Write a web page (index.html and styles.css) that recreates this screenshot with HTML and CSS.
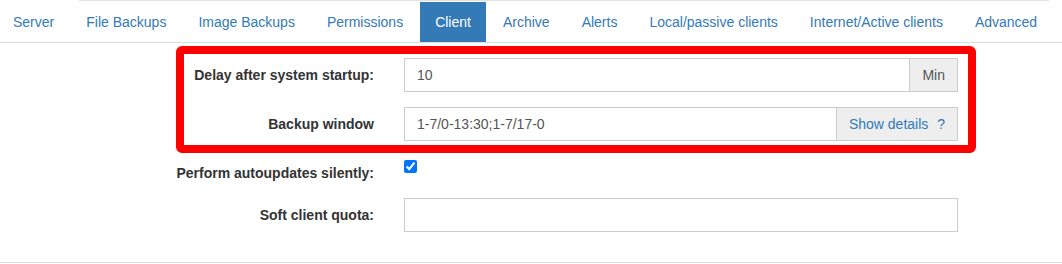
FILE: index.html
```html
<!DOCTYPE html>
<html lang="en">
<head>
    <meta charset="UTF-8">
    <title>Client settings</title>
    <link rel="stylesheet" href="styles.css">
</head>
<body>
    <div class="topline"></div>
    <ul class="nav-tabs">
        <li><a href="#">Server</a></li>
        <li><a href="#">File Backups</a></li>
        <li><a href="#">Image Backups</a></li>
        <li><a href="#">Permissions</a></li>
        <li class="active"><a href="#">Client</a></li>
        <li><a href="#">Archive</a></li>
        <li><a href="#">Alerts</a></li>
        <li><a href="#">Local/passive clients</a></li>
        <li><a href="#">Internet/Active clients</a></li>
        <li><a href="#">Advanced</a></li>
    </ul>

    <form class="settings">
        <div class="highlight"></div>

        <div class="form-group">
            <label class="control-label">Delay after system startup:</label>
            <div class="input-group">
                <input type="text" class="form-control" value="10">
                <span class="addon">Min</span>
            </div>
        </div>

        <div class="form-group">
            <label class="control-label">Backup window</label>
            <div class="input-group">
                <input type="text" class="form-control" value="1-7/0-13:30;1-7/17-0">
                <a href="#" class="addon link">Show details <span class="qmark">?</span></a>
            </div>
        </div>

        <div class="form-group check-row">
            <label class="control-label">Perform autoupdates silently:</label>
            <div class="checkbox">
                <input type="checkbox" checked>
            </div>
        </div>

        <div class="form-group">
            <label class="control-label">Soft client quota:</label>
            <div class="input-group">
                <input type="text" class="form-control" value="">
            </div>
        </div>
    </form>
    <div class="bottomline"></div>
</body>
</html>
```

FILE: styles.css
```css
body {
    margin: 0;
    font-family: "Liberation Sans", Arial, sans-serif;
    font-size: 14px;
    line-height: 20px;
    color: #333;
    background: #fff;
}
.topline {
    height: 1px;
    margin: 0 13px 1px 79px;
    background: #e3e3e3;
}
.nav-tabs {
    list-style: none;
    margin: 0 0 0 -2px;
    padding: 0;
    display: flex;
    border-bottom: 1px solid #ddd;
}
.nav-tabs li {
    margin-right: 2px;
}
.nav-tabs a {
    display: block;
    padding: 10px 15px;
    color: #337ab7;
    text-decoration: none;
}
.nav-tabs li.active a {
    background-color: #337ab7;
    color: #fff;
}
.settings {
    position: relative;
    padding: 15px 0 15px;
}
.highlight {
    position: absolute;
    left: 176px;
    top: 3px;
    width: 784px;
    height: 91px;
    border: 8px solid #ff0000;
    border-radius: 6px;
}
.form-group {
    display: grid;
    grid-template-columns: 374px 554px;
    column-gap: 30px;
    margin-bottom: 15px;
}
.control-label {
    text-align: right;
    font-weight: bold;
    padding-top: 7px;
}
.input-group {
    display: flex;
    position: relative;
    z-index: 1;
}
.form-control {
    flex: 1;
    min-width: 0;
    height: 34px;
    box-sizing: border-box;
    padding: 6px 12px;
    font-family: inherit;
    font-size: 14px;
    color: #555;
    border: 1px solid #ccc;
    border-radius: 0;
    outline: none;
}
.addon {
    padding: 6px 12px;
    height: 34px;
    box-sizing: border-box;
    background-color: #eee;
    border: 1px solid #ccc;
    border-left: 0;
    color: #555;
    white-space: nowrap;
}
.addon.link {
    color: #337ab7;
    text-decoration: none;
}
.qmark {
    margin-left: 5px;
}
.checkbox {
    min-height: 27px;
}
.checkbox input {
    margin: 4px 0 0;
    width: 13px;
    height: 13px;
}
.bottomline {
    height: 1px;
    background: #ddd;
}
```
